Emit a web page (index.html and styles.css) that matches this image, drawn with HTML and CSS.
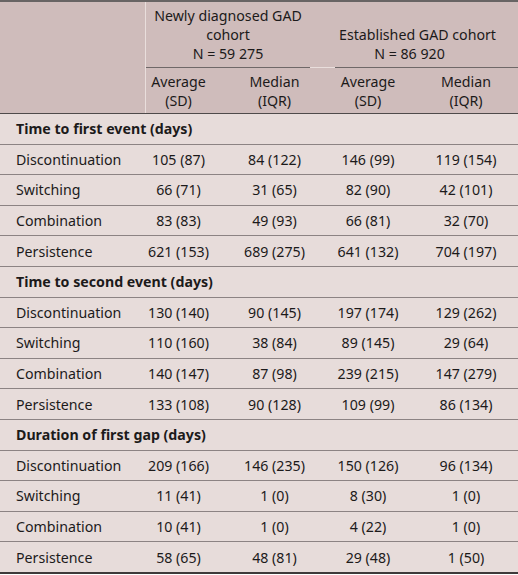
FILE: index.html
```html
<!DOCTYPE html>
<html>
  <head>
    <title>GAD treatment events</title>
    <link rel="stylesheet" href="styles.css">
  </head>
  <body>
    <div class="table">
      <div class="head">
        <div class="corner"></div>
        <div class="cohort cohort-new">
          <div class="cohort-text">Newly diagnosed GAD<br />cohort<br />N = 59 275</div>
          <div class="rule"></div>
        </div>
        <div class="cohort cohort-est">
          <div class="cohort-text">Established GAD cohort</div>
          <div class="cohort-text cohort-n">N = 86 920</div>
          <div class="rule"></div>
        </div>
        <div class="sub col-a">Average<br />(SD)</div>
        <div class="sub col-b">Median<br />(IQR)</div>
        <div class="sub col-c">Average<br />(SD)</div>
        <div class="sub col-d">Median<br />(IQR)</div>
      </div>

      <div class="row section">Time to first event (days)</div>
      <div class="row">
        <div class="label">Discontinuation</div>
        <div class="col-a">105 (87)</div>
        <div class="col-b">84 (122)</div>
        <div class="col-c">146 (99)</div>
        <div class="col-d">119 (154)</div>
      </div>
      <div class="row">
        <div class="label">Switching</div>
        <div class="col-a">66 (71)</div>
        <div class="col-b">31 (65)</div>
        <div class="col-c">82 (90)</div>
        <div class="col-d">42 (101)</div>
      </div>
      <div class="row">
        <div class="label">Combination</div>
        <div class="col-a">83 (83)</div>
        <div class="col-b">49 (93)</div>
        <div class="col-c">66 (81)</div>
        <div class="col-d">32 (70)</div>
      </div>
      <div class="row">
        <div class="label">Persistence</div>
        <div class="col-a">621 (153)</div>
        <div class="col-b">689 (275)</div>
        <div class="col-c">641 (132)</div>
        <div class="col-d">704 (197)</div>
      </div>

      <div class="row section">Time to second event (days)</div>
      <div class="row">
        <div class="label">Discontinuation</div>
        <div class="col-a">130 (140)</div>
        <div class="col-b">90 (145)</div>
        <div class="col-c">197 (174)</div>
        <div class="col-d">129 (262)</div>
      </div>
      <div class="row">
        <div class="label">Switching</div>
        <div class="col-a">110 (160)</div>
        <div class="col-b">38 (84)</div>
        <div class="col-c">89 (145)</div>
        <div class="col-d">29 (64)</div>
      </div>
      <div class="row">
        <div class="label">Combination</div>
        <div class="col-a">140 (147)</div>
        <div class="col-b">87 (98)</div>
        <div class="col-c">239 (215)</div>
        <div class="col-d">147 (279)</div>
      </div>
      <div class="row">
        <div class="label">Persistence</div>
        <div class="col-a">133 (108)</div>
        <div class="col-b">90 (128)</div>
        <div class="col-c">109 (99)</div>
        <div class="col-d">86 (134)</div>
      </div>

      <div class="row section">Duration of first gap (days)</div>
      <div class="row">
        <div class="label">Discontinuation</div>
        <div class="col-a">209 (166)</div>
        <div class="col-b">146 (235)</div>
        <div class="col-c">150 (126)</div>
        <div class="col-d">96 (134)</div>
      </div>
      <div class="row">
        <div class="label">Switching</div>
        <div class="col-a">11 (41)</div>
        <div class="col-b">1 (0)</div>
        <div class="col-c">8 (30)</div>
        <div class="col-d">1 (0)</div>
      </div>
      <div class="row">
        <div class="label">Combination</div>
        <div class="col-a">10 (41)</div>
        <div class="col-b">1 (0)</div>
        <div class="col-c">4 (22)</div>
        <div class="col-d">1 (0)</div>
      </div>
      <div class="row last">
        <div class="label">Persistence</div>
        <div class="col-a">58 (65)</div>
        <div class="col-b">48 (81)</div>
        <div class="col-c">29 (48)</div>
        <div class="col-d">1 (50)</div>
      </div>
    </div>
  </body>
</html>
```

FILE: styles.css
```css
* {
  box-sizing: border-box;
}

body {
  margin: 0;
  background-color: #ffffff;
  color: #1c1a1a;
  font-family: 'Noto Sans', 'Open Sans', sans-serif;
  font-size: 14.2px;
}

.table {
  width: 518px;
  border-top: 2px solid #686464;
  background-color: #e7dcda;
}

.head {
  display: grid;
  grid-template-columns: 146px 77px 99px 92px 1fr;
  grid-template-rows: 66px 45px;
  background-color: #cfbcbb;
  border-bottom: 1px solid #4e4a4a;
}

.corner {
  grid-row: 1 / span 2;
  border-right: 1px solid #e9dedc;
}

.cohort {
  display: flex;
  flex-direction: column;
  justify-content: flex-end;
  text-align: center;
  line-height: 19px;
  border-bottom: 1px solid #e9dedc;
}

.cohort-new {
  grid-column: 2 / span 2;
  padding-right: 12px;
}

.cohort-est {
  grid-column: 4 / span 2;
  padding-left: 13px;
  padding-right: 18px;
}

.cohort-n {
  margin-right: 16px;
}

.rule {
  height: 1px;
  margin-top: 4px;
  margin-bottom: -1px;
  background-color: #6f6868;
}

.cohort-est .rule {
  margin-right: -18px;
}

.sub {
  display: flex;
  align-items: center;
  justify-content: center;
  text-align: center;
  line-height: 19px;
}

.row {
  display: grid;
  grid-template-columns: 146px 77px 99px 92px 1fr;
  align-items: center;
  min-height: 30.6px;
  border-bottom: 1px solid #8c8383;
  text-align: center;
}

.row.last {
  min-height: 31.6px;
  border-bottom: 2px solid #3e3a3a;
}

.section {
  display: flex;
  padding-left: 16px;
  font-weight: 700;
  text-align: left;
}

.label {
  padding-left: 16px;
  text-align: left;
}

.col-a {
  padding-right: 12px;
}

.col-b {
  padding-left: 4px;
}
```
